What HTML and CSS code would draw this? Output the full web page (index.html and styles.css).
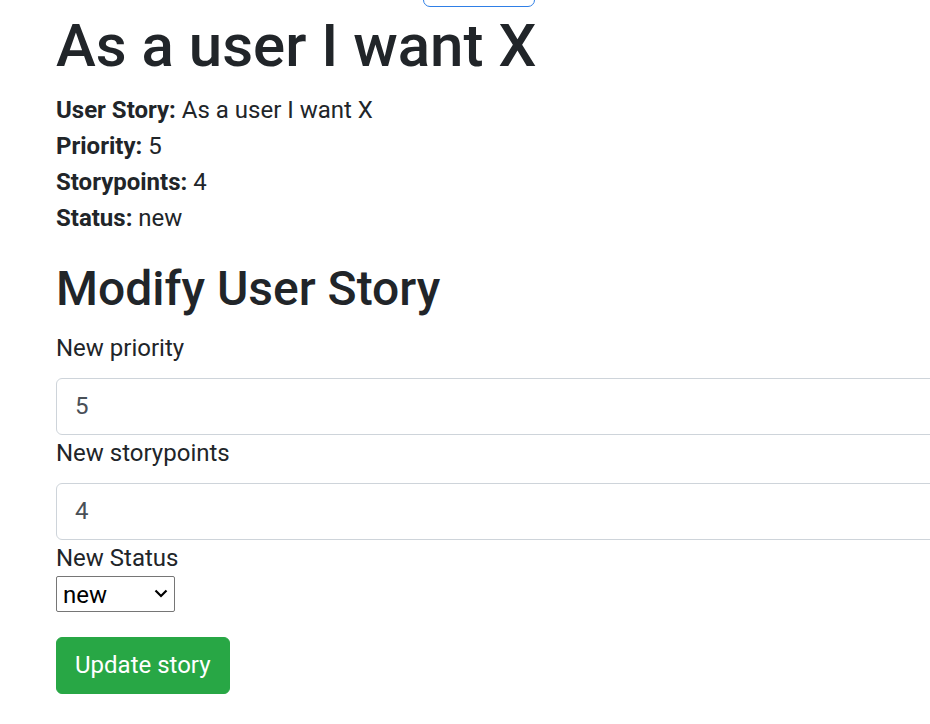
FILE: index.html
```html
<!DOCTYPE html>
<html lang="en">
<head>
<meta charset="utf-8">
<title>As a user I want X</title>
<link rel="stylesheet" href="styles.css">
</head>
<body>
<div class="page">
  <div class="top-btn"></div>
  <h1 class="title">As a user I want X</h1>
  <div class="details">
    <div class="detail"><b>User Story:</b> As a user I want X</div>
    <div class="detail"><b>Priority:</b> 5</div>
    <div class="detail"><b>Storypoints:</b> 4</div>
    <div class="detail"><b>Status:</b> new</div>
  </div>
  <h2 class="subtitle">Modify User Story</h2>
  <form class="form">
    <label class="label" for="prio">New priority</label>
    <input class="input" id="prio" type="text" value="5">
    <label class="label" for="sp">New storypoints</label>
    <input class="input" id="sp" type="text" value="4">
    <label class="label label-status" for="status">New Status</label>
    <select class="select" id="status">
      <option>new</option>
      <option>in progress</option>
      <option>done</option>
    </select>
    <button class="btn" type="button">Update story</button>
  </form>
</div>
</body>
</html>
```
FILE: styles.css
```css
html, body {
  margin: 0;
  padding: 0;
  background: #fff;
  overflow: hidden;
}
body {
  font-family: Roboto, "Liberation Sans", sans-serif;
  font-size: 24px;
  line-height: 1.5;
  color: #212529;
}
.page {
  padding-left: 56px;
  width: 1000px;
  display: flex;
  flex-direction: column;
  align-items: flex-start;
}
.top-btn {
  margin-left: 367px;
  margin-top: -33px;
  width: 112px;
  height: 40px;
  border: 1px solid #2f7fe6;
  border-radius: 7px;
  box-sizing: border-box;
}
.title {
  margin: 3px 0 10px;
  font-size: 60px;
  font-weight: 500;
  line-height: 1.2;
}
.details {
  margin-bottom: 24px;
}
.detail {
  line-height: 36px;
}
.detail b {
  font-weight: 700;
}
.subtitle {
  margin: 0 0 12px;
  font-size: 48px;
  font-weight: 500;
  line-height: 1.2;
}
.form {
  display: flex;
  flex-direction: column;
  align-items: flex-start;
}
.label {
  line-height: 36px;
  margin-bottom: 12px;
}
.input {
  width: 940px;
  height: 57px;
  box-sizing: border-box;
  padding: 0 18px;
  font-family: inherit;
  font-size: 24px;
  color: #495057;
  background: #fff;
  border: 1px solid #ced4da;
  border-radius: 6px;
  outline: none;
}
.label-status {
  margin-bottom: 0;
}
.select {
  -webkit-appearance: none;
  appearance: none;
  width: 119px;
  height: 36px;
  box-sizing: border-box;
  font-family: inherit;
  font-size: 24px;
  line-height: 1.5;
  color: #000;
  border: 1px solid #767676;
  border-radius: 2px;
  background: #fff url("data:image/svg+xml,%3Csvg xmlns='http://www.w3.org/2000/svg' width='14' height='9' viewBox='0 0 14 9'%3E%3Cpath d='M1.5 1.5 L7 7 L12.5 1.5' fill='none' stroke='%23000' stroke-width='2.2'/%3E%3C/svg%3E") no-repeat right 6px center / 14px 9px;
  padding: 0 4px 0 6px;
}
.btn {
  margin-top: 25px;
  height: 57px;
  padding: 0 18px;
  background: #28a745;
  color: #fff;
  border: 1px solid #28a745;
  border-radius: 6px;
  font-family: inherit;
  font-size: 24px;
  line-height: 1.5;
}
```
